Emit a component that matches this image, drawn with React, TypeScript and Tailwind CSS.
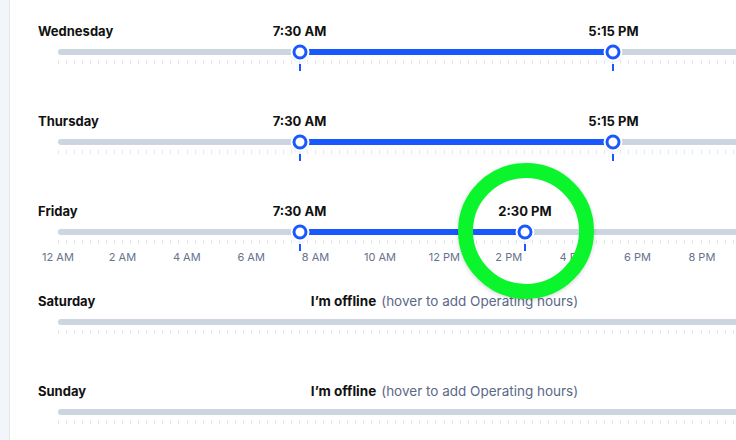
import React from "react"

type Day = {
  name: string
  open?: number // hours from midnight
  close?: number
  showScale?: boolean
}

const HOUR = 32.2

const days: Day[] = [
  { name: "Wednesday", open: 7.5, close: 17.25 },
  { name: "Thursday", open: 7.5, close: 17.25 },
  { name: "Friday", open: 7.5, close: 14.5, showScale: true },
  { name: "Saturday" },
  { name: "Sunday" },
]

const hourLabels = ["12 AM", "2 AM", "4 AM", "6 AM", "8 AM", "10 AM", "12 PM", "2 PM", "4 PM", "6 PM", "8 PM"]

const fmt = (h: number) => {
  const hr = Math.floor(h)
  const min = Math.round((h - hr) * 60)
  const suffix = hr >= 12 ? "PM" : "AM"
  const h12 = hr % 12 === 0 ? 12 : hr % 12
  return `${h12}:${String(min).padStart(2, "0")} ${suffix}`
}

function Handle({ at }: { at: number }) {
  return (
    <>
      {/* time label */}
      <div
        className="absolute top-[-26px] -translate-x-1/2 whitespace-nowrap text-[13px] leading-4 font-bold text-[#111]"
        style={{ left: at * HOUR }}
      >
        {fmt(at)}
      </div>
      <div className="absolute top-[3px] -translate-x-1/2 -translate-y-1/2" style={{ left: at * HOUR }}>
        <div className="w-[15px] h-[15px] rounded-full bg-white border-[3px] border-[#1a58ff] shadow-[0_0_0_2px_#fff,0_1px_4px_rgba(15,23,42,0.18)]" />
      </div>
      <div className="absolute top-[15px] w-[2px] h-[7px] -translate-x-1/2 bg-[#1a58ff]" style={{ left: at * HOUR }} />
    </>
  )
}

function DayRow({ day }: { day: Day }) {
  const hasHours = day.open !== undefined && day.close !== undefined

  return (
    <div className="h-[90px] pl-[28px]">
      <div className="text-[13px] leading-4 font-bold text-[#111]">{day.name}</div>

      <div className="ml-[20px] mt-[10px] w-[773px]">
        {/* track */}
        <div className="relative h-[6px] rounded-full bg-[#cdd5e1]">
          {hasHours && (
            <>
              <div
                className="absolute top-0 h-[6px] bg-[#1a58ff]"
                style={{ left: day.open! * HOUR, width: (day.close! - day.open!) * HOUR }}
              />
              <Handle at={day.open!} />
              <Handle at={day.close!} />
            </>
          )}
          {!hasHours && (
            <div className="absolute top-[-26px] left-1/2 -translate-x-1/2 whitespace-nowrap text-[13.5px] leading-4">
              <span className="font-bold text-[#111]">I’m offline</span>
              <span className="ml-[5px] text-[#5b6887]">(hover to add Operating hours)</span>
            </div>
          )}
        </div>

        {/* quarter-hour ticks */}
        <div className="mt-[5px] flex justify-between h-[4px]">
          {Array.from({ length: 97 }).map((_, i) => (
            <div key={i} className="w-px h-[4px] bg-[#e3e8ef]" />
          ))}
        </div>

        {day.showScale && (
          <div className="mt-[6px] -ml-[32.2px] flex">
            {hourLabels.map((l, i) => (
              <div key={i} className="w-[64.4px] shrink-0 text-center text-[11px] leading-[14px] text-[#67728c]">
                {l}
              </div>
            ))}
          </div>
        )}
      </div>
    </div>
  )
}

export default function App() {
  return (
    <div
      className="relative w-[736px] h-[440px] overflow-hidden bg-white flex"
      style={{ fontFamily: "Inter, 'Noto Sans', sans-serif" }}
    >
      <aside className="w-[10px] shrink-0 bg-[#f2f5f9] border-r border-[#e3e8ee]" />

      <main className="flex-1 min-w-0 pt-[23px]">
        {days.map((d) => (
          <DayRow key={d.name} day={d} />
        ))}
      </main>

      {/* green highlight ring */}
      <div className="absolute left-[458px] top-[163px] w-[136px] h-[136px] rounded-full border-[15px] border-[#0af52b] shadow-[0_1px_4px_rgba(0,0,0,0.2)] pointer-events-none" />
    </div>
  )
}
